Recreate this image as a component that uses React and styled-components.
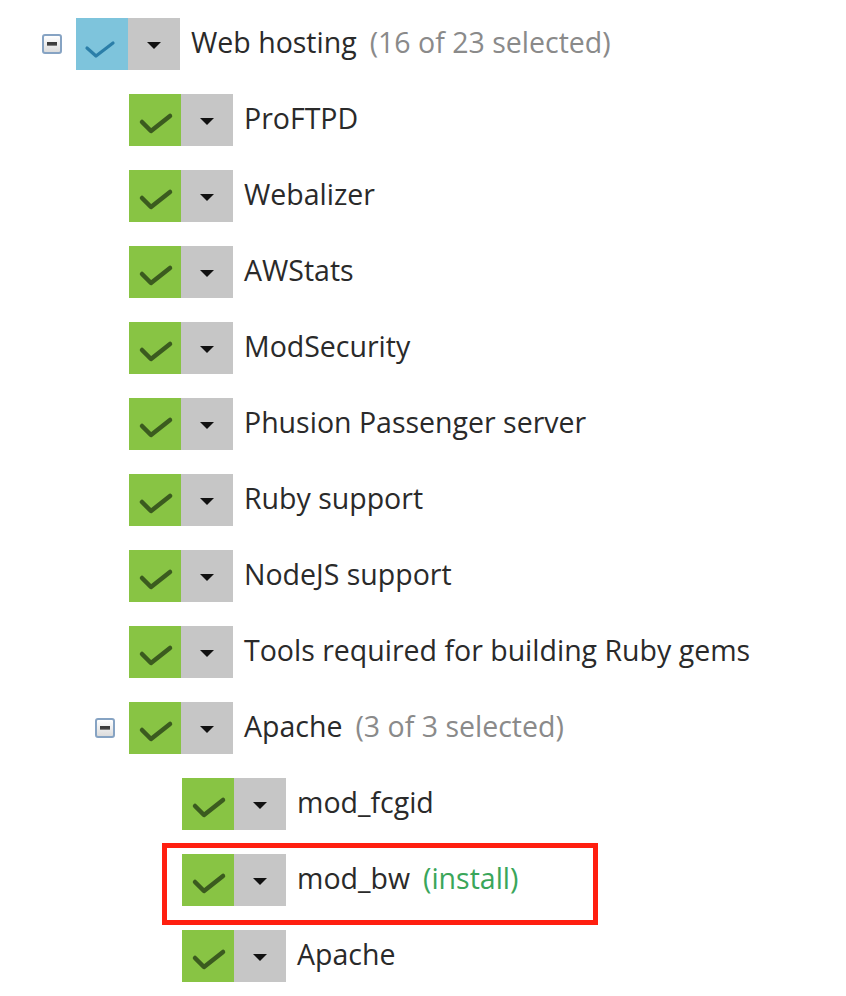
import React from "react";
import styled, { createGlobalStyle } from "styled-components";

const Global = createGlobalStyle`
  html, body { margin: 0; padding: 0; background: #fff; }
  body { font-family: "Open Sans", "Noto Sans", sans-serif; color: #2b2b2b; }
`;

const Tree = styled.ul`
  list-style: none;
  margin: 0;
  padding: 18px 0 0 0;
`;

const Row = styled.li`
  position: relative;
  display: flex;
  align-items: center;
  height: 52px;
  margin-bottom: 24px;
  padding-left: ${(p) => 42 + p.$level * 53 + (p.$expander ? 0 : 34)}px;
  ${(p) =>
    p.$highlight &&
    `
    &::after {
      content: "";
      position: absolute;
      left: ${42 + p.$level * 53 + 34 - 20}px;
      top: -11px;
      width: 426px;
      height: 72px;
      border: 5px solid #ff1f10;
      pointer-events: none;
    }
  `}
`;

const Expander = styled.span`
  box-sizing: border-box;
  width: 20px;
  height: 20px;
  margin-right: 14px;
  border: 2px solid #86a3c3;
  border-radius: 3px;
  background: linear-gradient(#ffffff, #dcdcdc);
  display: flex;
  align-items: center;
  justify-content: center;
  &::before {
    content: "";
    width: 10px;
    height: 4px;
    background: linear-gradient(#3c3c3c 60%, #9a9a9a);
  }
`;

const Check = styled.span`
  width: 52px;
  height: 52px;
  background: ${(p) => (p.$partial ? "#7ec4dc" : "#88c444")};
  display: flex;
  align-items: center;
  justify-content: center;
`;

const Drop = styled.span`
  width: 52px;
  height: 52px;
  background: #c6c6c6;
  display: flex;
  align-items: center;
  justify-content: center;
  &::before {
    content: "";
    margin-top: 2px;
    border-left: 7px solid transparent;
    border-right: 7px solid transparent;
    border-top: 7px solid #111;
  }
`;

const Label = styled.span`
  margin-left: 11px;
  margin-top: -5px;
  font-size: 28.5px;
  line-height: 52px;
  color: #2a2a2a;
  white-space: nowrap;
`;

const Note = styled.span`
  margin-left: 13px;
  color: ${(p) => (p.$install ? "#3aa65a" : "#8a8a8a")};
`;

const CheckMark = ({ partial }) =>
  partial ? (
    <svg width="52" height="52" viewBox="0 0 52 52">
      <path d="M11 30 L20 38 L37 25" fill="none" stroke="#2b7ea8" strokeWidth="3.2" strokeLinecap="round" strokeLinejoin="round" />
    </svg>
  ) : (
    <svg width="52" height="52" viewBox="0 0 52 52">
      <path d="M13 28 L22 37 L41 22" fill="none" stroke="#3b5b1f" strokeWidth="4.5" strokeLinecap="round" strokeLinejoin="round" />
    </svg>
  );

const items = [
  { level: 0, label: "Web hosting", note: "(16 of 23 selected)", expander: true, partial: true },
  { level: 1, label: "ProFTPD" },
  { level: 1, label: "Webalizer" },
  { level: 1, label: "AWStats" },
  { level: 1, label: "ModSecurity" },
  { level: 1, label: "Phusion Passenger server" },
  { level: 1, label: "Ruby support" },
  { level: 1, label: "NodeJS support" },
  { level: 1, label: "Tools required for building Ruby gems" },
  { level: 1, label: "Apache", note: "(3 of 3 selected)", expander: true },
  { level: 2, label: "mod_fcgid" },
  { level: 2, label: "mod_bw", note: "(install)", install: true, highlight: true },
  { level: 2, label: "Apache" },
];

export default function App() {
  return (
    <>
      <Global />
      <Tree>
        {items.map((it, i) => (
          <Row key={i} $level={it.level} $expander={it.expander} $highlight={it.highlight}>
            {it.expander && <Expander />}
            <Check $partial={it.partial}>
              <CheckMark partial={it.partial} />
            </Check>
            <Drop />
            <Label>
              {it.label}
              {it.note && <Note $install={it.install}>{it.note}</Note>}
            </Label>
          </Row>
        ))}
      </Tree>
    </>
  );
}
